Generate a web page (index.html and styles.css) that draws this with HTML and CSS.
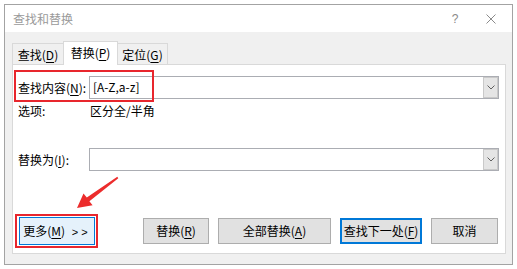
FILE: index.html
```html
<!DOCTYPE html>
<html lang="zh-CN">
<head>
    <meta charset="UTF-8">
    <meta name="viewport" content="width=device-width, initial-scale=1.0">
    <title>查找和替换</title>
    <link rel="stylesheet" href="styles.css">
</head>
<body>
    <div class="window">
        <div class="titlebar">
            <span class="title">查找和替换</span>
            <span class="tb-btn help">?</span>
            <span class="tb-btn close">
                <svg width="10" height="10" viewBox="0 0 10 10"><path d="M0.5 0.5 L9.5 9.5 M9.5 0.5 L0.5 9.5" stroke="#8a8a8a" stroke-width="1" fill="none"/></svg>
            </span>
        </div>

        <div class="window-body">
            <div class="tabs">
                <div class="tab tab-find">查找(<u>D</u>)</div>
                <div class="tab tab-replace active">替换(<u>P</u>)</div>
                <div class="tab tab-goto">定位(<u>G</u>)</div>
            </div>

            <div class="panel">
                <div class="field-row">
                    <span class="field-label">查找内容(<u>N</u>):</span>
                    <div class="combo">
                        <span class="combo-value">[A-Z,a-z]</span>
                        <span class="combo-drop">
                            <svg width="8" height="5" viewBox="0 0 8 5"><path d="M0.5 0.5 L4 4 L7.5 0.5" stroke="#606060" stroke-width="1" fill="none"/></svg>
                        </span>
                    </div>
                </div>

                <div class="options-row">
                    <span class="field-label">选项:</span>
                    <span class="options-value">区分全/半角</span>
                </div>

                <div class="field-row replace-row">
                    <span class="field-label">替换为(<u>I</u>):</span>
                    <div class="combo">
                        <span class="combo-value"></span>
                        <span class="combo-drop">
                            <svg width="8" height="5" viewBox="0 0 8 5"><path d="M0.5 0.5 L4 4 L7.5 0.5" stroke="#606060" stroke-width="1" fill="none"/></svg>
                        </span>
                    </div>
                </div>

                <div class="buttons">
                    <button class="btn btn-more">更多(<u>M</u>) <span class="arrows">&gt;&gt;</span></button>
                    <button class="btn btn-replace">替换(<u>R</u>)</button>
                    <button class="btn btn-replace-all">全部替换(<u>A</u>)</button>
                    <button class="btn btn-next default">查找下一处(<u>F</u>)</button>
                    <button class="btn btn-cancel">取消</button>
                </div>
            </div>
        </div>
    </div>

    <!-- red markup drawn on top of the screenshot -->
    <svg class="annotations" width="517" height="269" viewBox="0 0 517 269">
        <rect x="15" y="71" width="138" height="30" fill="none" stroke="#e8262d" stroke-width="2"/>
        <rect x="16" y="215" width="81" height="32" fill="none" stroke="#e8262d" stroke-width="2"/>
        <polygon points="77,208 83.5,193.5 86.8,197.6 117.3,176.8 118.3,178.2 89.4,201.2 92.6,205.2" fill="#ec2c2c"/>
    </svg>
</body>
</html>
```

FILE: styles.css
```css
body {
    margin: 0;
    background-color: #ffffff;
    font-family: "Noto Sans CJK SC", "Noto Sans", sans-serif;
    font-size: 12px;
    color: #000000;
}

.window {
    box-sizing: border-box;
    width: 509px;
    height: 261px;
    margin: 4px 0 0 4px;
    border: 1px solid #a3a3a3;
    display: flex;
    flex-direction: column;
    background-color: #f0f0f0;
}

.titlebar {
    height: 27px;
    background-color: #ffffff;
    display: flex;
    align-items: center;
    padding-left: 8px;
}

.title {
    color: #9a9a9a;
    line-height: 16px;
}

.tb-btn {
    display: flex;
    align-items: center;
    justify-content: center;
    color: #8a8a8a;
}

.help {
    margin-left: auto;
    width: 12px;
    font-family: "Liberation Sans", sans-serif;
    font-size: 12px;
}

.close {
    width: 12px;
    margin: 0 15px 0 24px;
}

.window-body {
    flex: 1;
    display: flex;
    flex-direction: column;
    padding: 9px 6px 10px 7px;
}

.tabs {
    display: flex;
    align-items: flex-end;
    height: 24px;
    margin-bottom: -1px;
}

.tab {
    box-sizing: border-box;
    height: 22px;
    border: 1px solid #d9d9d9;
    border-bottom: none;
    background-color: #f0f0f0;
    display: flex;
    align-items: center;
    justify-content: center;
    padding-bottom: 1px;
}

.tab + .tab {
    margin-left: -1px;
}

.tab-find {
    width: 52px;
}

.tab-replace {
    width: 55px;
}

.tab-goto {
    width: 51px;
}

.tab.active {
    position: relative;
    z-index: 1;
    height: 24px;
    background-color: #ffffff;
    padding-bottom: 3px;
}

u {
    text-decoration-thickness: 1px;
    text-underline-offset: 2px;
}

.panel {
    flex: 1;
    box-sizing: border-box;
    background-color: #ffffff;
    border: 1px solid #d9d9d9;
    padding: 11px 6px 0 5px;
}

.field-row {
    display: flex;
    align-items: center;
    height: 23px;
}

.field-label {
    width: 71px;
    flex-shrink: 0;
    line-height: 16px;
}

.combo {
    flex: 1;
    box-sizing: border-box;
    height: 23px;
    border: 1px solid #abadb3;
    display: flex;
    align-items: stretch;
}

.combo-value {
    flex: 1;
    padding-left: 3px;
    line-height: 20px;
}

.combo-drop {
    box-sizing: border-box;
    width: 15px;
    background-color: #e5e5e5;
    border: 1px solid #c9c9c9;
    display: flex;
    align-items: center;
    justify-content: center;
}

.options-row {
    display: flex;
    align-items: center;
    height: 16px;
    margin-top: 4px;
}

.options-value {
    padding-left: 1px;
    line-height: 16px;
}

.replace-row {
    margin-top: 29px;
}

.buttons {
    display: flex;
    align-items: center;
    gap: 9px;
    height: 28px;
    margin-top: 46px;
}

.btn {
    box-sizing: border-box;
    height: 26px;
    padding: 0;
    border: 1px solid #adadad;
    background-color: #e1e1e1;
    font-family: "Noto Sans CJK SC", "Noto Sans", sans-serif;
    font-size: 12px;
    color: #000000;
    line-height: 16px;
}

.btn-more {
    width: 76px;
    height: 28px;
    margin: 0 39px 0 1px;
    background-color: #e5f1fb;
    border-color: #0078d7;
}

.arrows {
    margin-left: 4px;
    letter-spacing: 3px;
    font-family: "Liberation Sans", sans-serif;
    font-size: 11px;
}

.btn-replace {
    width: 66px;
}

.btn-replace-all {
    width: 113px;
}

.btn-next {
    width: 82px;
}

.btn.default {
    border-color: #0078d7;
    box-shadow: inset 0 0 0 1px #0078d7;
}

.btn-cancel {
    width: 67px;
}

.annotations {
    position: absolute;
    top: 0;
    left: 0;
    pointer-events: none;
}
```
